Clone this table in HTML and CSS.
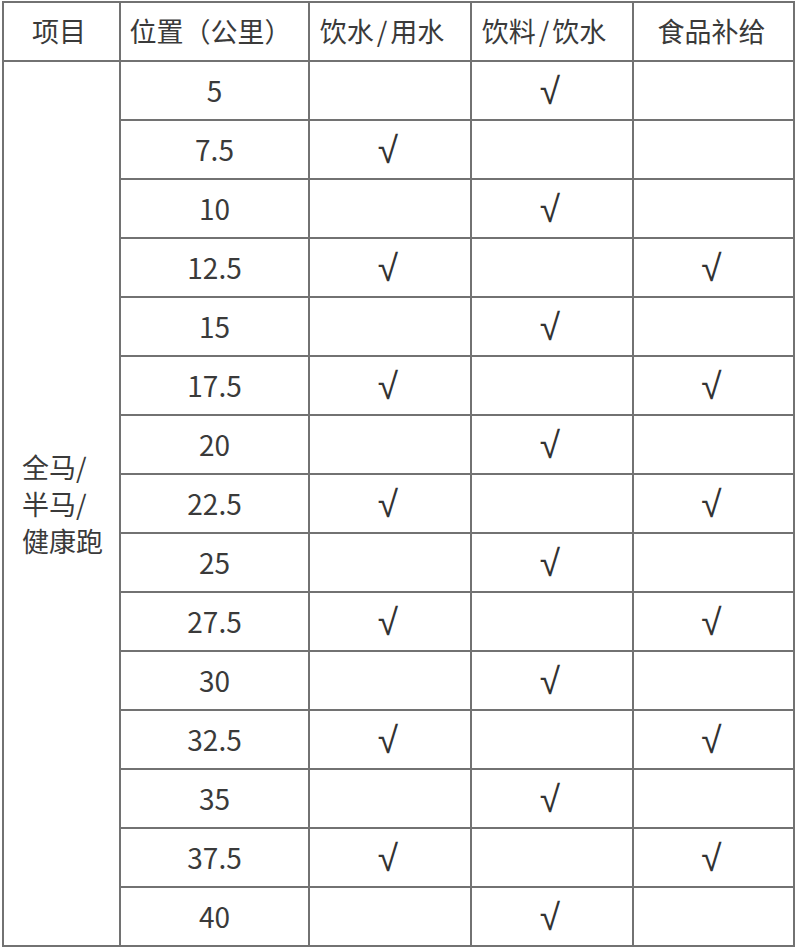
FILE: index.html
```html
<!DOCTYPE html>
<html lang="zh">
<head>
<meta charset="utf-8">
<link rel="stylesheet" href="styles.css">
</head>
<body>
<table class="grid">
  <colgroup>
    <col class="c1"><col class="c2"><col class="c3"><col class="c4"><col class="c5">
  </colgroup>
  <thead>
    <tr>
      <th class="h1">项目</th>
      <th class="h2">位置（公里）</th>
      <th>饮水<span class="sl">/</span>用水</th>
      <th>饮料<span class="sl">/</span>饮水</th>
      <th class="h5">食品补给</th>
    </tr>
  </thead>
  <tbody>
    <tr><td rowspan="15" class="item"><span class="item-text">全马/<br>半马/<br>健康跑</span></td><td>5</td><td></td><td class="ck">√</td><td></td></tr>
    <tr><td>7.5</td><td class="ck">√</td><td></td><td></td></tr>
    <tr><td>10</td><td></td><td class="ck">√</td><td></td></tr>
    <tr><td>12.5</td><td class="ck">√</td><td></td><td class="ck">√</td></tr>
    <tr><td>15</td><td></td><td class="ck">√</td><td></td></tr>
    <tr><td>17.5</td><td class="ck">√</td><td></td><td class="ck">√</td></tr>
    <tr><td>20</td><td></td><td class="ck">√</td><td></td></tr>
    <tr><td>22.5</td><td class="ck">√</td><td></td><td class="ck">√</td></tr>
    <tr><td>25</td><td></td><td class="ck">√</td><td></td></tr>
    <tr><td>27.5</td><td class="ck">√</td><td></td><td class="ck">√</td></tr>
    <tr><td>30</td><td></td><td class="ck">√</td><td></td></tr>
    <tr><td>32.5</td><td class="ck">√</td><td></td><td class="ck">√</td></tr>
    <tr><td>35</td><td></td><td class="ck">√</td><td></td></tr>
    <tr><td>37.5</td><td class="ck">√</td><td></td><td class="ck">√</td></tr>
    <tr><td>40</td><td></td><td class="ck">√</td><td></td></tr>
  </tbody>
</table>
</body>
</html>
```
FILE: styles.css
```css
html, body {
  margin: 0;
  padding: 0;
  background: #ffffff;
}
body {
  padding: 1px 0 0 2px;
  font-family: "Noto Sans CJK SC", "Noto Sans", sans-serif;
  color: #3a3a3a;
}
.grid {
  border-collapse: collapse;
  table-layout: fixed;
  width: 791px;
}
.c1 { width: 117px; }
.c2 { width: 189px; }
.c3 { width: 162px; }
.c4 { width: 162px; }
.c5 { width: 161px; }
.grid th, .grid td {
  border: 2px solid #727272;
  padding: 0 0 2px 0;
  text-align: center;
  vertical-align: middle;
  font-weight: 400;
  line-height: 32px;
  white-space: nowrap;
}
.grid thead tr { height: 59px; }
.grid tbody tr { height: 59px; }
.grid th {
  font-size: 27px;
  padding-right: 16px;
}
.grid th.h1 { padding-right: 5px; }
.grid th.h2 { padding-right: 8px; }
.grid th.h5 { padding-right: 4px; }
.sl {
  margin: 0 3px;
}
.grid td { font-size: 28px; }
.grid td.ck {
  font-family: "Liberation Sans", "DejaVu Sans", sans-serif;
  font-size: 37px;
  padding-top: 4px;
  padding-right: 4px;
  color: #333333;
}
.grid td.item {
  padding: 0 0 0 2px;
}
.item-text {
  display: inline-block;
  text-align: left;
  line-height: 37px;
  font-size: 27px;
}
```
